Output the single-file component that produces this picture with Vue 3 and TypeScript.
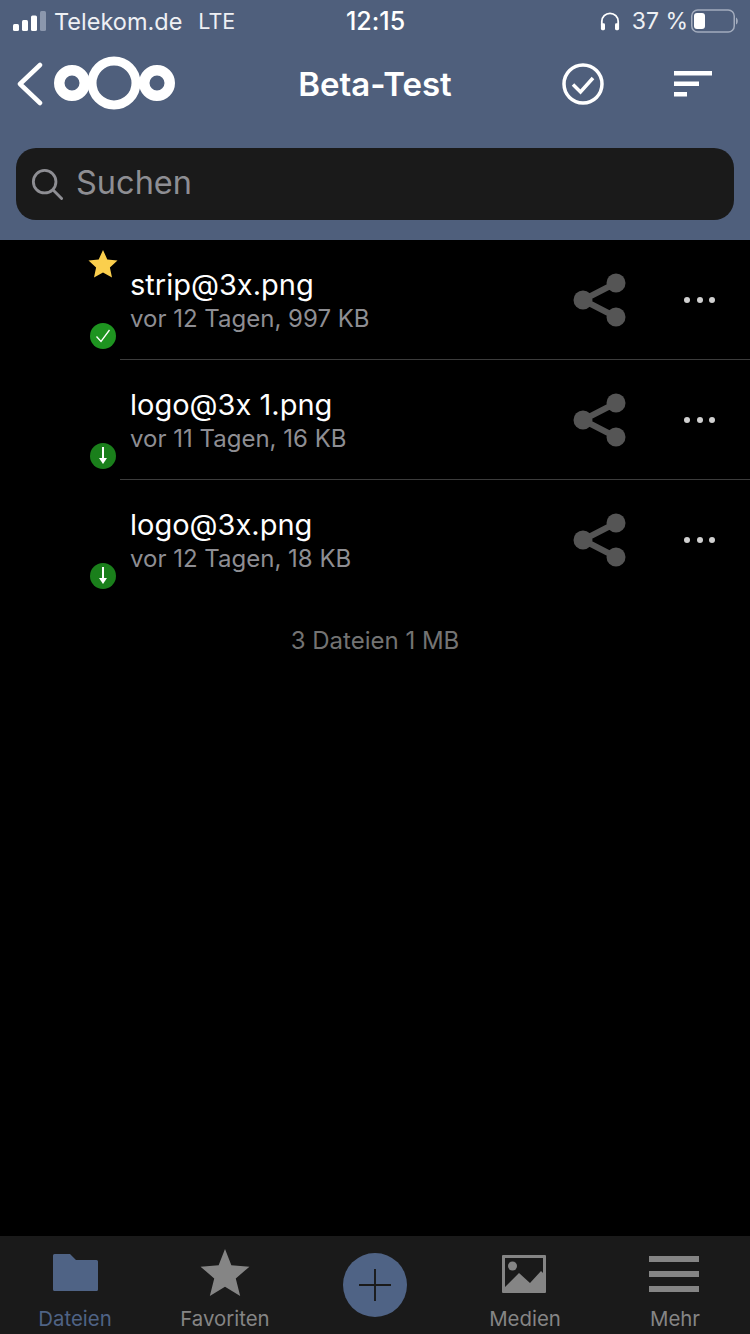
<script setup lang="ts">
interface FileRow { name: string; meta: string; starred: boolean; synced: boolean }
const files: FileRow[] = [
  { name: 'strip@3x.png', meta: 'vor 12 Tagen, 997 KB', starred: true, synced: true },
  { name: 'logo@3x 1.png', meta: 'vor 11 Tagen, 16 KB', starred: false, synced: false },
  { name: 'logo@3x.png', meta: 'vor 12 Tagen, 18 KB', starred: false, synced: false },
]
</script>

<template>
  <div class="screen">
    <header class="top">
      <div class="status">
        <div class="status-side">
          <svg class="signal" width="34" height="20" viewBox="0 0 34 20">
            <rect x="0" y="13" width="6" height="7" rx="1.5" fill="#fff" />
            <rect x="9" y="9" width="6" height="11" rx="1.5" fill="#fff" />
            <rect x="18" y="4.500" width="6" height="15.500" rx="1.500" fill="#fff" />
            <rect x="27" y="0" width="6" height="20" rx="1.500" fill="#8b97ad" />
          </svg>
          <span class="carrier">Telekom.de</span>
          <span class="net">LTE</span>
        </div>
        <span class="clock">12:15</span>
        <div class="status-side right">
          <svg width="20" height="19" viewBox="0 0 22 20" fill="none">
            <path d="M2 14V10a9 9 0 0 1 18 0v4" stroke="#fff" stroke-width="2" />
            <rect x="1" y="12" width="4.500" height="7.500" rx="1.500" fill="#fff" />
            <rect x="16.500" y="12" width="4.500" height="7.500" rx="1.500" fill="#fff" />
          </svg>
          <span class="pct">37 %</span>
          <svg width="47" height="24" viewBox="0 0 47 24" fill="none">
            <rect x="0.750" y="1" width="42.500" height="22" rx="6" stroke="#a3acbd" stroke-width="1.500" />
            <rect x="3" y="4" width="11" height="16" rx="3" fill="#fff" />
            <path d="M45 8.500c1.200.5 1.800 2 1.800 3.500s-.6 3-1.800 3.500z" fill="#a3acbd" />
          </svg>
        </div>
      </div>

      <nav class="nav">
        <div class="nav-left">
          <svg width="28" height="44" viewBox="0 0 28 44" fill="none">
            <path d="M24 3L4 22l20 19" stroke="#fff" stroke-width="4.500" stroke-linecap="round" stroke-linejoin="round" />
          </svg>
          <svg class="logo" width="121" height="56" viewBox="0 0 121 56" fill="none">
            <circle cx="18" cy="28" r="12.750" stroke="#fff" stroke-width="10.500" />
            <circle cx="60" cy="28" r="22" stroke="#fff" stroke-width="9" />
            <circle cx="103" cy="28" r="12.750" stroke="#fff" stroke-width="10.500" />
          </svg>
        </div>
        <h1 class="title">Beta-Test</h1>
        <div class="nav-right">
          <svg width="42" height="42" viewBox="0 0 42 42" fill="none">
            <circle cx="21" cy="21" r="19" stroke="#fff" stroke-width="3.500" />
            <path d="M11 21.500l7.500 7.500L31 15" stroke="#fff" stroke-width="3.500" />
          </svg>
          <svg width="38" height="26" viewBox="0 0 38 26" fill="#fff">
            <rect x="0" y="0" width="38" height="4.500" />
            <rect x="0" y="10.500" width="25" height="4.500" />
            <rect x="0" y="21" width="13" height="4.500" />
          </svg>
        </div>
      </nav>

      <div class="search">
        <svg width="32" height="32" viewBox="0 0 34 34" fill="none">
          <circle cx="14.500" cy="14.500" r="12" stroke="#8e8e93" stroke-width="3" />
          <path d="M23.500 23.500l9 9" stroke="#8e8e93" stroke-width="3" stroke-linecap="round" />
        </svg>
        <span>Suchen</span>
      </div>
    </header>

    <main class="list">
      <article v-for="f in files" :key="f.name" class="row">
        <div class="thumb">
          <svg v-if="f.starred" class="star" width="30" height="28" viewBox="0 0 30 28">
            <path d="M15 0l4.300 9.400 10.200 1.200-7.600 6.900 2.100 10.100L15 22.500 6 27.600l2.100-10.100L.5 10.600l10.200-1.200z" fill="#fbcf4d" />
          </svg>
          <span class="badge" :class="{ synced: f.synced }">
            <svg v-if="f.synced" width="16" height="14" viewBox="0 0 16 14" fill="none">
              <path d="M1.500 7.500l4.500 5L14.500 1" stroke="#fff" stroke-width="1.300" />
            </svg>
            <svg v-else width="12" height="18" viewBox="0 0 12 18" fill="none">
              <path d="M6 0v12" stroke="#fff" stroke-width="2" />
              <path d="M2 11h8l-4 6z" fill="#fff" />
            </svg>
          </span>
        </div>
        <div class="body">
          <div class="text">
            <div class="name">{{ f.name }}</div>
            <div class="meta">{{ f.meta }}</div>
          </div>
          <svg class="share" width="54" height="54" viewBox="0 0 54 54" fill="none">
            <path d="M10 27L43 10M10 27l33 17" stroke="#555" stroke-width="6" />
            <circle cx="10" cy="27" r="9.500" fill="#555" />
            <circle cx="43" cy="10" r="9.500" fill="#555" />
            <circle cx="43" cy="44" r="9.500" fill="#555" />
          </svg>
          <div class="dots"><i></i><i></i><i></i></div>
        </div>
      </article>
      <p class="summary">3 Dateien 1 MB</p>
    </main>

    <footer class="tabs">
      <div class="tab active">
        <svg class="ic-folder" width="46" height="40" viewBox="0 0 46 40">
          <path d="M1 2.500A1.500 1.500 0 0 1 2.500 1H18l6 6h20.500A1.500 1.500 0 0 1 46 8.500V36.500A1.500 1.500 0 0 1 44.500 38H2.500A1.500 1.500 0 0 1 1 36.500z" fill="#4f6385" />
        </svg>
        <span>Dateien</span>
      </div>
      <div class="tab">
        <svg class="ic-star" width="50" height="47" viewBox="0 0 50 48">
          <path d="M25 0l6.500 16.500L50 18 36 30l4.500 18L25 38.500 9.500 48 14 30 0 18l18.500-1.500z" fill="#858585" />
        </svg>
        <span>Favoriten</span>
      </div>
      <div class="tab">
        <div class="plus">
          <svg width="32" height="32" viewBox="0 0 34 34" stroke="#1a1a1a" stroke-width="2">
            <path d="M17 0v34M0 17h34" />
          </svg>
        </div>
      </div>
      <div class="tab">
        <svg class="ic-media" width="44" height="38" viewBox="0 0 44 38">
          <path fill-rule="evenodd" d="M1 0h42a1 1 0 0 1 1 1v36a1 1 0 0 1-1 1H1a1 1 0 0 1-1-1V1a1 1 0 0 1 1-1zM3 3v29l14-14 11 10 11-12 2 2V3z" fill="#858585" />
          <circle cx="10.500" cy="11" r="4.500" fill="#858585" />
        </svg>
        <span>Medien</span>
      </div>
      <div class="tab">
        <svg class="ic-more" width="50" height="36" viewBox="0 0 50 36" fill="#858585">
          <rect y="0" width="50" height="6" />
          <rect y="15" width="50" height="6" />
          <rect y="30" width="50" height="6" />
        </svg>
        <span>Mehr</span>
      </div>
    </footer>
  </div>
</template>

<style>
html, body { margin: 0; background: #000; }
</style>

<style scoped>
.screen {
  width: 750px;
  height: 1334px;
  display: flex;
  flex-direction: column;
  background: #000;
  color: #fff;
  font-family: Inter, "Liberation Sans", sans-serif;
  font-variant-ligatures: none;
  font-feature-settings: "calt" 0;
  overflow: hidden;
}
.top {
  height: 240px;
  flex: none;
  background: #4f5f7c;
  display: flex;
  flex-direction: column;
}
.status {
  height: 42px;
  padding: 0 12px 0 13px;
  display: grid;
  grid-template-columns: 1fr auto 1fr;
  align-items: center;
  font-size: 23px;
}
.status-side { display: flex; align-items: center; }
.status-side.right { justify-content: flex-end; gap: 12px; }
.carrier { margin-left: 7px; color: #eef0f4; font-size: 23.500px; }
.net { margin-left: 16px; color: #eef0f4; font-size: 21.500px; }
.clock { font-size: 25px; font-weight: 500; }
.pct { margin-right: -9px; color: #eef0f4; }
.nav {
  height: 84px;
  padding: 0 16px;
  display: grid;
  grid-template-columns: 1fr auto 1fr;
  align-items: center;
}
.nav-left { display: flex; align-items: center; gap: 10px; }
.logo { margin-top: -2px; }
.title { margin: 0; font-size: 33px; font-weight: 600; }
.nav-right { display: flex; align-items: center; justify-content: flex-end; gap: 70px; padding-right: 22px; }
.search {
  margin: 22px 16px 0;
  height: 72px;
  border-radius: 20px;
  background: #1a1a1a;
  display: flex;
  align-items: center;
  padding-left: 15px;
  gap: 13px;
  color: #8e8e93;
  font-size: 32.500px;
}
.search span { margin-top: -3px; }
.list { flex: 1; }
.row { height: 120px; display: flex; }
.thumb { width: 120px; flex: none; position: relative; }
.star { position: absolute; left: 88px; top: 10px; }
.badge {
  position: absolute;
  left: 90px;
  top: 83px;
  width: 26px;
  height: 26px;
  border-radius: 50%;
  background: #1a7f1b;
  display: flex;
  align-items: center;
  justify-content: center;
}
.badge.synced { background: #1e9420; }
.body {
  flex: 1;
  display: flex;
  align-items: center;
  padding: 0 35px 0 10px;
  border-bottom: 1px solid #3c3c3c;
}
.row:last-of-type .body { border-bottom-color: transparent; }
.text { flex: 1; margin-top: 1px; }
.name { font-size: 29px; line-height: 38px; }
.meta { font-size: 24px; line-height: 30px; color: #8e8e93; }
.share { margin-right: 57px; }
.dots { display: flex; gap: 6.500px; }
.dots i { width: 6px; height: 6px; border-radius: 50%; background: #d0d0d0; }
.summary {
  margin: 21px 0 0;
  text-align: center;
  color: #737373;
  font-size: 24px;
  line-height: 40px;
}
.tabs {
  height: 98px;
  flex: none;
  background: #1a1a1a;
  display: grid;
  grid-template-columns: repeat(5, 150px);
}
.tab {
  display: flex;
  flex-direction: column;
  align-items: center;
  justify-content: flex-end;
  padding-bottom: 3px;
  color: #858585;
  font-size: 20.400px;
  line-height: 24px;
}
.tab.active { color: #4f6385; }
.ic-folder { margin: 0 1px 14px 0; }
.ic-star { margin: 0 0 11px; }
.ic-media { margin: 0 2px 14px 0; }
.ic-more { margin: 0 2px 15px 0; }
.plus {
  width: 64px;
  height: 64px;
  margin-bottom: 14px;
  border-radius: 50%;
  background: #4f6385;
  display: flex;
  align-items: center;
  justify-content: center;
}
</style>
